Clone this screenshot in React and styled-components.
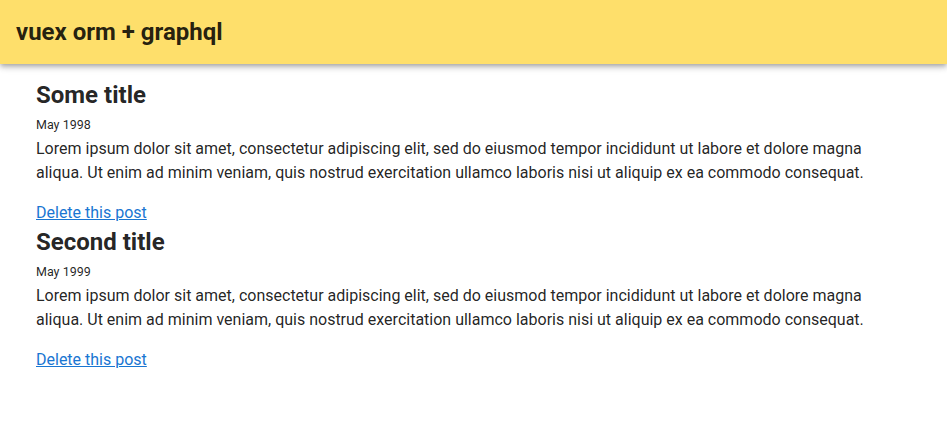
import styled, { createGlobalStyle } from "styled-components";

const GlobalStyle = createGlobalStyle`
  body {
    margin: 0;
    font-family: Roboto, "Noto Sans", sans-serif;
    color: rgba(0, 0, 0, 0.87);
    background: #fff;
  }
`;

const Toolbar = styled.header`
  height: 64px;
  display: flex;
  align-items: center;
  padding: 0 16px;
  background-color: #fedf6b;
  box-shadow: 0 2px 4px -1px rgba(0, 0, 0, 0.2), 0 4px 5px 0 rgba(0, 0, 0, 0.14),
    0 1px 10px 0 rgba(0, 0, 0, 0.12);
  position: relative;
  z-index: 1;
`;

const ToolbarTitle = styled.h1`
  margin: 0;
  font-size: 24px;
  font-weight: 700;
`;

const Content = styled.main`
  padding: 15px 36px 0;
`;

const Post = styled.article`
  display: flex;
  flex-direction: column;

  & + & {
    margin-top: 1px;
  }
`;

const PostTitle = styled.h2`
  margin: 0;
  font-size: 24px;
  font-weight: 700;
  line-height: 32px;
`;

const PostDate = styled.div`
  margin-top: 2px;
  font-size: 12.5px;
  line-height: 24px;
`;

const PostBody = styled.p`
  margin: 0 0 16px;
  font-size: 16px;
  line-height: 24px;
`;

const DeleteLink = styled.a`
  font-size: 16px;
  line-height: 24px;
  color: #1976d2;
  text-decoration: underline;
  cursor: pointer;
  align-self: flex-start;
`;

const lorem =
  "Lorem ipsum dolor sit amet, consectetur adipiscing elit, sed do eiusmod tempor incididunt ut labore et dolore magna aliqua. Ut enim ad minim veniam, quis nostrud exercitation ullamco laboris nisi ut aliquip ex ea commodo consequat.";

const posts = [
  { id: 1, title: "Some title", date: "May 1998", body: lorem },
  { id: 2, title: "Second title", date: "May 1999", body: lorem },
];

export default function App() {
  return (
    <>
      <GlobalStyle />
      <Toolbar>
        <ToolbarTitle>vuex orm + graphql</ToolbarTitle>
      </Toolbar>
      <Content>
        {posts.map((post) => (
          <Post key={post.id}>
            <PostTitle>{post.title}</PostTitle>
            <PostDate>{post.date}</PostDate>
            <PostBody>{post.body}</PostBody>
            <DeleteLink href="#">Delete this post</DeleteLink>
          </Post>
        ))}
      </Content>
    </>
  );
}
